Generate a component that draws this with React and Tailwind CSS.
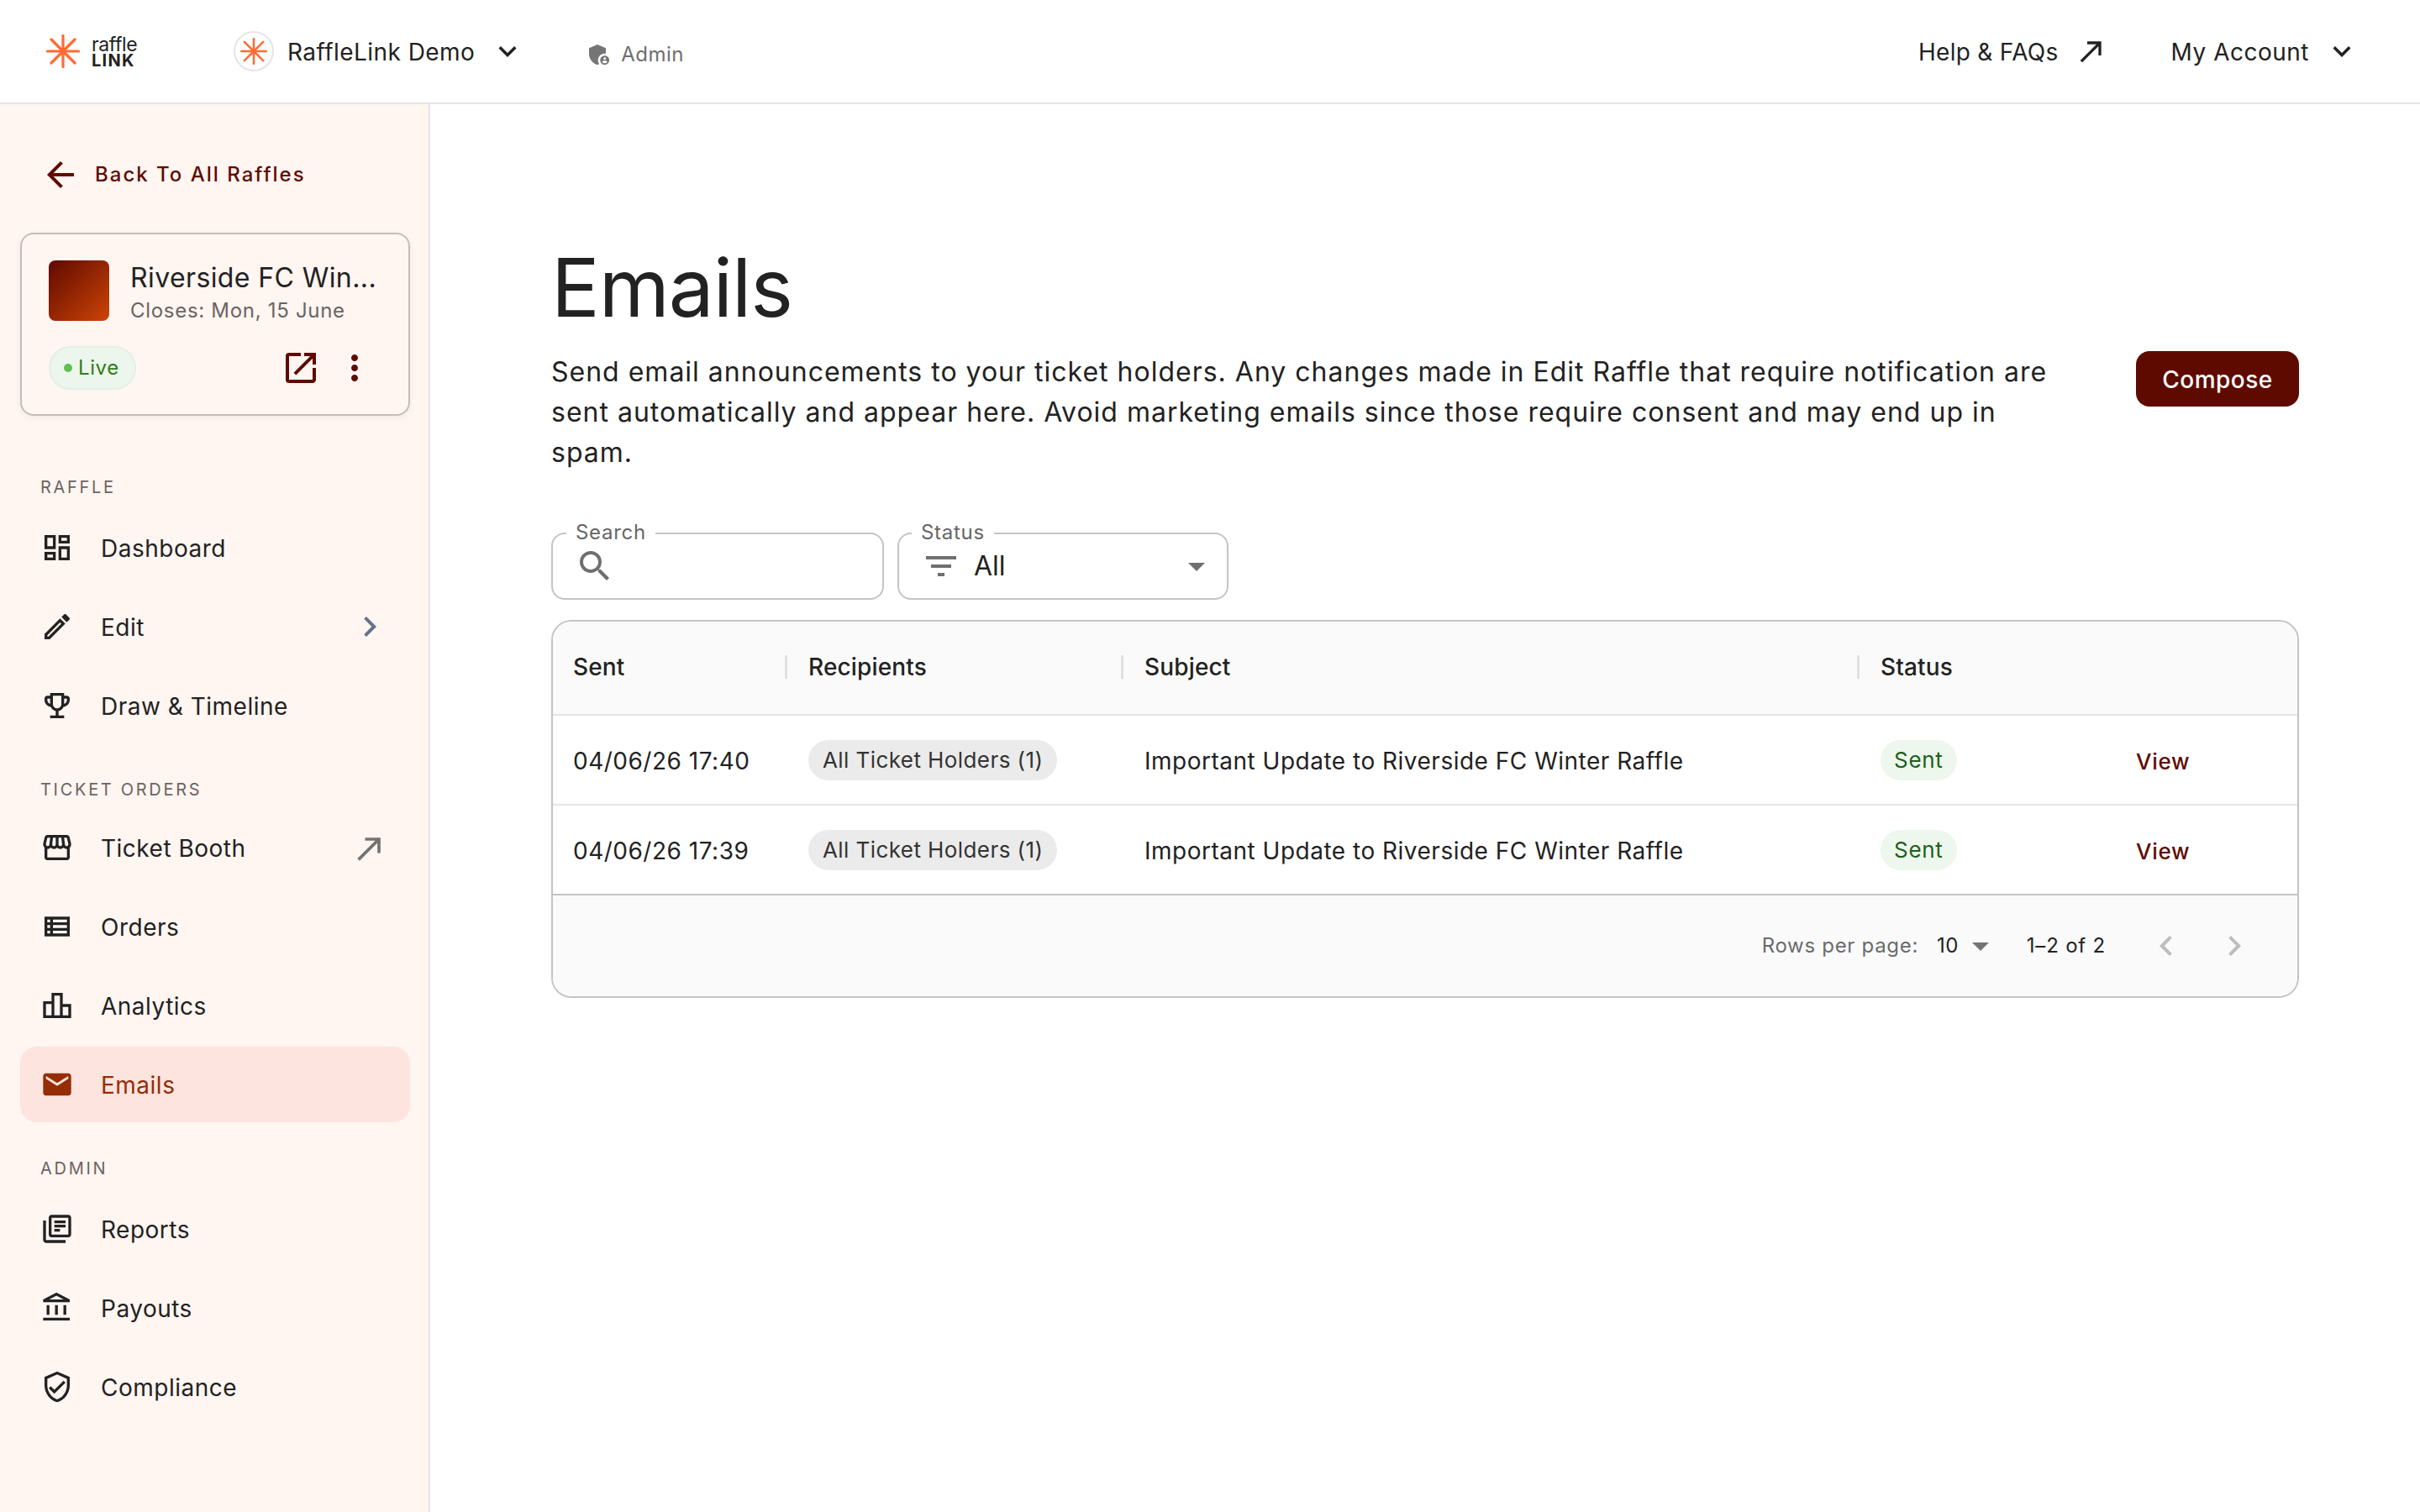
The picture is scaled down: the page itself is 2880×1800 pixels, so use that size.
import React from "react";
import {
  MdArrowBack, MdOpenInNew, MdMoreVert, MdOutlineDashboard, MdOutlineEdit, MdOutlineEmojiEvents,
  MdOutlineStorefront, MdOutlineViewList, MdOutlineLeaderboard, MdEmail, MdOutlineLibraryBooks,
  MdOutlineAccountBalance, MdOutlineVerifiedUser, MdChevronRight, MdChevronLeft, MdKeyboardArrowDown,
  MdNorthEast, MdAdminPanelSettings, MdSearch, MdFilterList, MdArrowDropDown,
} from "react-icons/md";

function Burst({ className }) {
  return (
    <svg viewBox="0 0 40 40" className={className} fill="none" stroke="#ff6b35" strokeWidth="3.2" strokeLinecap="round">
      <path d="M20 1.5V38.5M1.5 20H38.5M6 6L34 34M34 6L6 34" />
    </svg>
  );
}

function NavRow({ icon: Icon, label, right, active }) {
  return (
    <div className={`ml-[24px] mr-[22px] flex items-center pl-[24px] pr-[24px] rounded-[20px] ${active ? "h-[90px] -mt-[2px] pt-[1px] bg-[#fde4df] text-[#952d05]" : "h-[88px] text-[#222222]"}`}>
      <Icon className={`w-[40px] h-[40px] shrink-0 -mt-[2px] ${active ? "text-[#952d05]" : "text-[#222222]"}`} />
      <span className="ml-[32px] text-[28px] tracking-[0.5px] leading-[40px] flex-1">{label}</span>
      {right}
    </div>
  );
}

function SectionLabel({ children, className }) {
  return <div className={`pl-[48px] text-[20px] leading-[28px] tracking-[2.7px] text-[#6b6462] ${className}`}>{children}</div>;
}

function Sidebar() {
  return (
    <aside className="w-[512px] shrink-0 bg-[#fff5f1] border-r-[2px] border-[#e5e5e5] min-h-[1676px]">
      <div className="flex items-center h-[48px] mt-[60px] pl-[48px]">
        <MdArrowBack className="w-[48px] h-[48px] text-[#5f0a00]" />
        <span className="ml-[17px] text-[24px] tracking-[2px] text-[#5f0a00] font-medium">Back To All Raffles</span>
      </div>
      <div className="ml-[24px] mr-[22px] mt-[45px] h-[218px] rounded-[16px] border-[2px] border-[#c6bcb9] shadow-[0_2px_8px_rgba(0,0,0,0.06)] px-[32px] pt-[31px]">
        <div className="flex items-start">
          <div className="w-[72px] h-[72px] rounded-[8px] bg-gradient-to-br from-[#5f0a00] to-[#cf4409] shrink-0" />
          <div className="ml-[25px] min-w-0 pt-[1px]">
            <div className="text-[32px] leading-[40px] tracking-[0.4px] text-[#222222] whitespace-nowrap">Riverside FC Win...</div>
            <div className="text-[24px] leading-[38px] tracking-[0.7px] text-[#6b6462] whitespace-nowrap">Closes: Mon, 15 June</div>
          </div>
        </div>
        <div className="flex items-center mt-[23px]">
          <div className="h-[52px] w-[104px] rounded-full bg-[#ecf6ec] border-[2px] border-[#e3f0e3] flex items-center pl-[16px]">
            <span className="w-[10px] h-[10px] rounded-full bg-[#5fbf50]" />
            <span className="ml-[7px] text-[24px] tracking-[0.6px] text-[#2f7d1b]">Live</span>
          </div>
          <MdOpenInNew className="w-[48px] h-[48px] ml-[172px] text-[#5f0a00]" />
          <MdMoreVert className="w-[48px] h-[48px] ml-[16px] text-[#5f0a00]" />
        </div>
      </div>
      <SectionLabel className="mt-[71px]">RAFFLE</SectionLabel>
      <div className="mt-[15px] flex flex-col gap-[6px]">
        <NavRow icon={MdOutlineDashboard} label="Dashboard" />
        <NavRow icon={MdOutlineEdit} label="Edit" right={<MdChevronRight className="w-[48px] h-[48px] text-[#64748b] -mt-[3px]" />} />
        <NavRow icon={MdOutlineEmojiEvents} label="Draw & Timeline" />
      </div>
      <SectionLabel className="mt-[41px]">TICKET ORDERS</SectionLabel>
      <div className="mt-[12px] flex flex-col gap-[6px]">
        <NavRow icon={MdOutlineStorefront} label="Ticket Booth" right={<MdNorthEast className="w-[44px] h-[44px] text-[#757170] mr-[2px]" />} />
        <NavRow icon={MdOutlineViewList} label="Orders" />
        <NavRow icon={MdOutlineLeaderboard} label="Analytics" />
        <NavRow icon={MdEmail} label="Emails" active />
      </div>
      <SectionLabel className="mt-[41px]">ADMIN</SectionLabel>
      <div className="mt-[15px] flex flex-col gap-[6px]">
        <NavRow icon={MdOutlineLibraryBooks} label="Reports" />
        <NavRow icon={MdOutlineAccountBalance} label="Payouts" />
        <NavRow icon={MdOutlineVerifiedUser} label="Compliance" />
      </div>
    </aside>
  );
}

function Header() {
  return (
    <header className="h-[124px] border-b-[2px] border-[#e5e5e5] flex items-center bg-white">
      <Burst className="ml-[55px] w-[40px] h-[40px] shrink-0" />
      <div className="ml-[14px] w-[60px] flex flex-col text-[#222222] mt-[1px]">
        <span className="text-[23px] leading-[19px] tracking-[-0.4px]">raffle</span>
        <span className="mt-[1px] text-[20px] leading-[16px] font-bold tracking-[1.3px]">LINK</span>
      </div>
      <div className="ml-[109px] w-[48px] h-[48px] rounded-full border-[2px] border-[#e5e5e5] flex items-center justify-center">
        <Burst className="w-[32px] h-[32px]" />
      </div>
      <span className="ml-[16px] mt-[1px] text-[28px] tracking-[0.45px] text-[#222222]">RaffleLink Demo</span>
      <MdKeyboardArrowDown className="ml-[18px] w-[42px] h-[42px] text-[#222222]" />
      <div className="ml-[72px] flex items-center mt-[7px]">
        <MdAdminPanelSettings className="w-[32px] h-[32px] text-[#757575]" />
        <span className="ml-[10px] text-[24px] tracking-[0.45px] text-[#6e6e6e]">Admin</span>
      </div>
      <div className="flex-1" />
      <span className="mt-[1px] text-[28px] tracking-[0.3px] text-[#222222]">Help &amp; FAQs</span>
      <MdNorthEast className="ml-[19px] w-[40px] h-[40px] text-[#222222]" />
      <span className="ml-[75px] mt-[1px] text-[28px] tracking-[0.5px] text-[#222222]">My Account</span>
      <MdKeyboardArrowDown className="ml-[18px] w-[42px] h-[42px] text-[#222222] mr-[72px]" />
    </header>
  );
}

const cols = "grid grid-cols-[280px_400px_876px_304px_1fr] items-center";

function Field({ label, width, labelLeft, children }) {
  return (
    <div className={`relative ${width} h-[80px] rounded-[16px] border-[2px] border-[#c4c4c4] flex items-center`}>
      <span className={`absolute ${labelLeft} -top-[14px] px-[11px] bg-white text-[24px] leading-[24px] tracking-[0.7px] text-[#666666]`}>{label}</span>
      {children}
    </div>
  );
}

function Row({ date, last, height }) {
  return (
    <div className={`${cols} ${height} border-b-[2px] ${last ? "border-[#c4c4c4]" : "border-[#e5e5e5]"}`}>
      <span className="pl-[24px] pt-[2px] text-[28px] tracking-[0.5px] text-[#222222]">{date}</span>
      <span className="pl-[24px]">
        <span className="inline-flex items-center h-[48px] px-[17px] rounded-full bg-[#ebebeb] text-[26px] tracking-[0.42px] text-[#333333]">All Ticket Holders (1)</span>
      </span>
      <span className="pl-[24px] pt-[2px] text-[28px] tracking-[0.5px] text-[#222222]">Important Update to Riverside FC Winter Raffle</span>
      <span className="pl-[24px]">
        <span className="inline-flex items-center h-[48px] px-[16px] rounded-full bg-[#edf7ed] text-[26px] tracking-[0.7px] text-[#1e5e1a]">Sent</span>
      </span>
      <span className="pl-[24px] pt-[3px] text-[26px] tracking-[0.7px] text-[#5f0a00] font-medium">View</span>
    </div>
  );
}

function Head({ children, sep }) {
  return (
    <div className="relative h-full flex items-center pl-[24px] pb-[3px] text-[28px] tracking-[0.15px] font-medium text-[#222222]">
      {children}
      {sep && <span className="absolute right-[1px] top-[40px] h-[28px] w-[3px] bg-[#e0e0e0]" />}
    </div>
  );
}

export default function App() {
  return (
    <div className="min-h-[1800px] bg-white font-['Inter','Liberation_Sans',sans-serif]">
      <Header />
      <div className="flex">
        <Sidebar />
        <main className="flex-1 pl-[144px] pr-[144px] pt-[162px]">
          <h1 className="text-[96px] leading-[112px] font-[375] tracking-[-1px] text-[#222222]">Emails</h1>
          <div className="flex items-start mt-[21px]">
            <p className="w-[1800px] text-[32px] leading-[48px] tracking-[1px] text-[#222222]">
              Send email announcements to your ticket holders. Any changes made in Edit Raffle that require notification are sent automatically and appear here. Avoid marketing emails since those require consent and may end up in spam.
            </p>
            <div className="flex-1" />
            <button className="-mt-[1px] pt-[2px] w-[194px] h-[66px] rounded-[16px] bg-[#5f0a00] text-white text-[28px] tracking-[0.5px] font-medium">Compose</button>
          </div>
          <div className="flex gap-[16px] mt-[71px]">
            <Field label="Search" width="w-[396px]" labelLeft="left-[16px]">
              <MdSearch className="w-[48px] h-[48px] text-[#6f6f6f] ml-[26px]" />
            </Field>
            <Field label="Status" width="w-[394px]" labelLeft="left-[15px]">
              <MdFilterList className="w-[48px] h-[48px] text-[#6f6f6f] ml-[26px]" />
              <span className="ml-[15px] text-[32px] text-[#222222]">All</span>
              <div className="flex-1" />
              <MdArrowDropDown className="w-[48px] h-[48px] text-[#6f6f6f] mr-[12px]" />
            </Field>
          </div>
          <div className="mt-[24px] rounded-[24px] border-[2px] border-[#c4c4c4] overflow-hidden h-[450px]">
            <div className={`${cols} h-[112px] bg-[#fafafa] border-b-[2px] border-[#e5e5e5]`}>
              <Head sep>Sent</Head>
              <Head sep>Recipients</Head>
              <Head sep>Subject</Head>
              <Head>Status</Head>
              <div />
            </div>
            <Row date="04/06/26 17:40" height="h-[107px]" />
            <Row date="04/06/26 17:39" height="h-[107px]" last />
            <div className="h-[120px] bg-[#fafafa] flex items-center justify-end pr-[51px]">
              <span className="text-[24px] tracking-[0.7px] text-[#6b6b6b]">Rows per page:</span>
              <span className="ml-[22px] text-[24px] tracking-[0.4px] text-[#222222]">10</span>
              <MdArrowDropDown className="ml-[2px] w-[48px] h-[48px] text-[#757575]" />
              <span className="ml-[31px] text-[24px] tracking-[0.8px] text-[#222222]">1–2 of 2</span>
              <MdChevronLeft className="ml-[48px] w-[48px] h-[48px] text-[#bdbdbd]" />
              <MdChevronRight className="ml-[33px] w-[48px] h-[48px] text-[#bdbdbd]" />
            </div>
          </div>
        </main>
      </div>
    </div>
  );
}
